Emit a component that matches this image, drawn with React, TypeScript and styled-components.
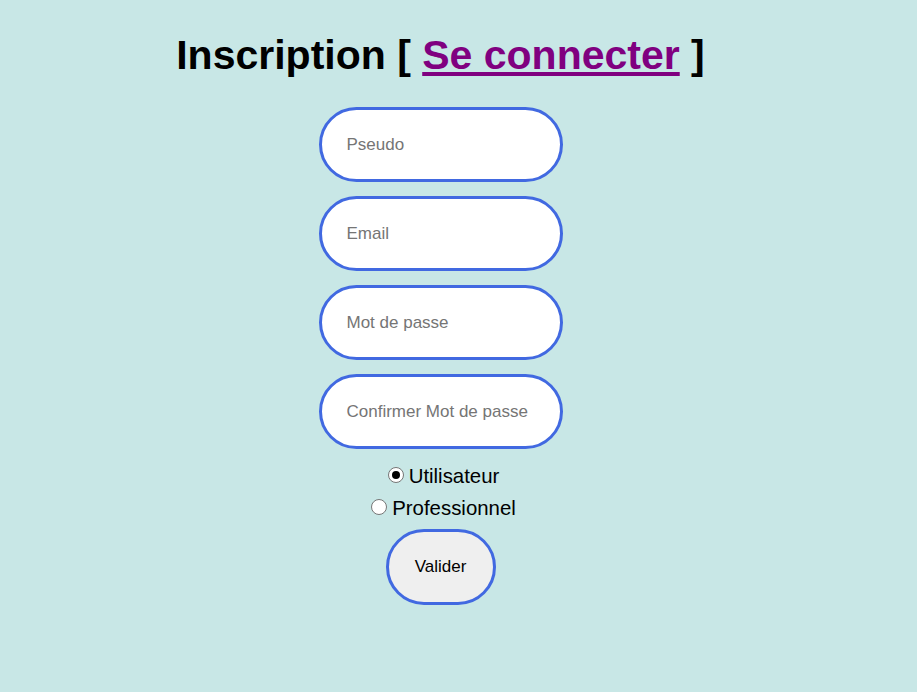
import React from "react";
import styled, { createGlobalStyle } from "styled-components";

const Global = createGlobalStyle`
  html, body { margin: 0; padding: 0; background: #c8e7e6; }
  body { font-family: "Liberation Sans", Arial, sans-serif; }
`;

const Page = styled.div`
  width: 881px;
  min-height: 692px;
  display: flex;
  flex-direction: column;
  align-items: center;
  padding-top: 29px;
  box-sizing: border-box;
`;

const Title = styled.h1`
  margin: 0 0 26px;
  font-size: 41px;
  font-weight: bold;
  color: #000;
  line-height: 52px;
`;

const Link = styled.a`
  color: #800080;
  text-decoration: underline;
`;

const Form = styled.form`
  display: flex;
  flex-direction: column;
  align-items: center;
`;

const Field = styled.input`
  width: 244px;
  height: 75px;
  box-sizing: border-box;
  border: 3px solid #4169e1;
  border-radius: 38px;
  background: #fff;
  padding: 0 0 0 25px;
  margin-bottom: 14px;
  font-family: "Liberation Sans", Arial, sans-serif;
  font-size: 17px;
  outline: none;
  &::placeholder { color: #757575; }
`;

const RadioRow = styled.label<{ $first?: boolean }>`
  display: flex;
  align-items: center;
  font-size: 20.4px;
  line-height: 32px;
  color: #000;
  padding-left: 6px;
  margin-top: ${(p) => (p.$first ? "-3px" : "0")};
`;

const Radio = styled.input`
  appearance: none;
  -webkit-appearance: none;
  margin: 0 5px 2px 0;
  width: 16px;
  height: 16px;
  box-sizing: border-box;
  border-radius: 50%;
  border: 1px solid #767676;
  background: #fff;
  display: grid;
  place-items: center;
  &:checked::after {
    content: "";
    width: 8px;
    height: 8px;
    border-radius: 50%;
    background: #000;
  }
`;

const Button = styled.button`
  margin-top: 5px;
  width: 110px;
  height: 76px;
  box-sizing: border-box;
  border: 3px solid #4169e1;
  border-radius: 38px;
  background: #efefef;
  font-family: "Liberation Sans", Arial, sans-serif;
  font-size: 17px;
  color: #000;
`;

export default function App() {
  return (
    <Page>
      <Global />
      <Title>
        Inscription [ <Link href="#">Se connecter</Link> ]
      </Title>
      <Form onSubmit={(e) => e.preventDefault()}>
        <Field type="text" placeholder="Pseudo" />
        <Field type="email" placeholder="Email" />
        <Field type="password" placeholder="Mot de passe" />
        <Field type="password" placeholder="Confirmer Mot de passe" />
        <RadioRow $first>
          <Radio type="radio" name="role" defaultChecked />
          Utilisateur
        </RadioRow>
        <RadioRow>
          <Radio type="radio" name="role" />
          Professionnel
        </RadioRow>
        <Button type="submit">Valider</Button>
      </Form>
    </Page>
  );
}
